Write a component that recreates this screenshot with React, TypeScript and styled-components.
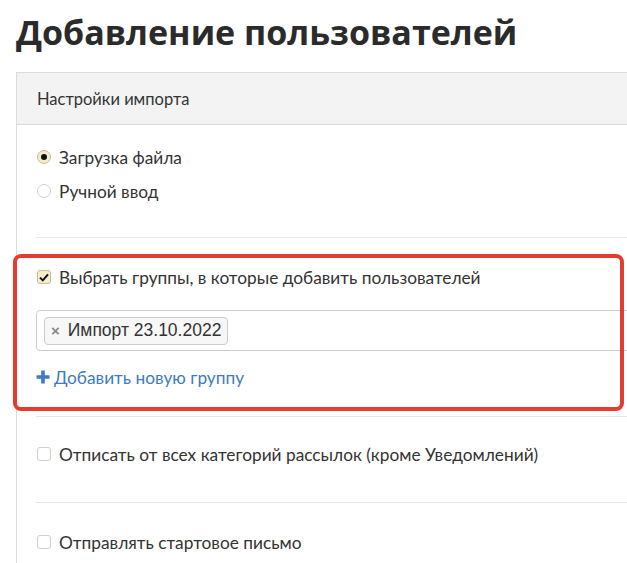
import React from "react";
import styled, { createGlobalStyle } from "styled-components";

const Global = createGlobalStyle`
  html, body { margin: 0; padding: 0; background: #fff; overflow: hidden; }
  body { font-family: Lato, "Open Sans", Arial, sans-serif; color: #333; }
`;

const Page = styled.div`
  position: relative;
  width: 627px;
  height: 563px;
  overflow: hidden;
  padding: 0 0 0 16px;
  box-sizing: border-box;
`;

const Title = styled.h1`
  margin: 0;
  padding-top: 10px;
  height: 72px;
  box-sizing: border-box;
  font-family: "Open Sans", sans-serif;
  font-weight: 700;
  font-size: 34px;
  line-height: 44px;
  color: #2b2b2b;
  letter-spacing: 0;
`;

const Panel = styled.div`
  width: 700px;
  border: 1px solid #dcdcdc;
  box-sizing: border-box;
`;

const PanelHeader = styled.div`
  height: 51px;
  background: #f3f3f3;
  border-bottom: 1px solid #dcdcdc;
  display: flex;
  align-items: center;
  padding-left: 20px;
  font-size: 16.5px;
  color: #333;
`;

const PanelBody = styled.div`
  padding: 0 0 0 19px;
`;

const Section = styled.div<{ $pt: number; $pb: number; $last?: boolean }>`
  position: relative;
  padding-top: ${(p) => p.$pt}px;
  padding-bottom: ${(p) => p.$pb}px;
  border-bottom: ${(p) => (p.$last ? "none" : "1px solid #e6e6e6")};
  display: flex;
  flex-direction: column;
`;

const Row = styled.label`
  display: flex;
  align-items: center;
  height: 34px;
  gap: 8px;
  font-size: 17.3px;
  color: #333;
`;

const Radio = styled.span<{ $on?: boolean }>`
  width: 14px;
  height: 14px;
  margin-left: 1px;
  border-radius: 50%;
  box-sizing: border-box;
  border: 1px solid ${(p) => (p.$on ? "#cdbb8c" : "#cfcfcf")};
  background: ${(p) => (p.$on ? "#f6ebcd" : "#fff")};
  display: flex;
  align-items: center;
  justify-content: center;
  &::after {
    content: "";
    display: ${(p) => (p.$on ? "block" : "none")};
    width: 6px;
    height: 6px;
    border-radius: 50%;
    background: #111;
  }
`;

const Check = styled.span<{ $on?: boolean }>`
  width: 14px;
  height: 14px;
  margin-left: 1px;
  border-radius: 3px;
  box-sizing: border-box;
  border: 1px solid ${(p) => (p.$on ? "#cdbb8c" : "#cfcfcf")};
  background: ${(p) => (p.$on ? "#f6ebcd" : "#fff")};
  display: flex;
  align-items: center;
  justify-content: center;
`;

const Select = styled.div`
  margin-top: 16px;
  height: 41px;
  border: 1px solid #cccccc;
  border-radius: 4px;
  box-sizing: border-box;
  display: flex;
  align-items: center;
  padding-left: 7px;
`;

const Tag = styled.span`
  height: 28px;
  box-sizing: border-box;
  border: 1px solid #cccccc;
  border-radius: 4px;
  background: #f7f7f7;
  display: inline-flex;
  align-items: center;
  padding: 0 6px 0 6px;
  gap: 8px;
  font-family: "Liberation Sans", Arial, sans-serif;
  font-size: 17.5px;
  color: #333;
`;

const Remove = styled.span`
  color: #888;
  font-weight: 700;
  font-size: 15px;
  line-height: 1;
`;

const AddLink = styled.a`
  margin-top: 16px;
  height: 20px;
  display: flex;
  align-items: center;
  gap: 4px;
  color: #3d7cc0;
  font-size: 17.3px;
  text-decoration: none;
`;

const Highlight = styled.div`
  position: absolute;
  left: -23px;
  top: 16px;
  width: 611px;
  bottom: 5px;
  border: 4px solid #e43d30;
  border-radius: 8px;
  box-sizing: border-box;
  pointer-events: none;
`;

const CheckMark = () => (
  <svg width="10" height="9" viewBox="0 0 10 9">
    <path d="M1 4.6 L3.8 7.4 L9 1.4" fill="none" stroke="#111" strokeWidth="2" />
  </svg>
);

const Plus = () => (
  <svg width="14" height="14" viewBox="0 0 14 14">
    <path d="M7 0.5 V13.5 M0.5 7 H13.5" stroke="#3d7cc0" strokeWidth="3.6" />
  </svg>
);

export default function App() {
  return (
    <>
      <Global />
      <Page>
        <Title>Добавление пользователей</Title>
        <Panel>
          <PanelHeader>Настройки импорта</PanelHeader>
          <PanelBody>
            <Section $pt={15} $pb={29}>
              <Row>
                <Radio $on />
                Загрузка файла
              </Row>
              <Row>
                <Radio />
                Ручной ввод
              </Row>
            </Section>
            <Section $pt={22} $pb={29}>
              <Highlight />
              <Row>
                <Check $on>
                  <CheckMark />
                </Check>
                Выбрать группы, в которые добавить пользователей
              </Row>
              <Select>
                <Tag>
                  <Remove>×</Remove>
                  Импорт 23.10.2022
                </Tag>
              </Select>
              <AddLink href="#">
                <Plus />
                Добавить новую группу
              </AddLink>
            </Section>
            <Section $pt={20} $pb={31}>
              <Row>
                <Check />
                Отписать от всех категорий рассылок (кроме Уведомлений)
              </Row>
            </Section>
            <Section $pt={22} $pb={20} $last>
              <Row>
                <Check />
                Отправлять стартовое письмо
              </Row>
            </Section>
          </PanelBody>
        </Panel>
      </Page>
    </>
  );
}
